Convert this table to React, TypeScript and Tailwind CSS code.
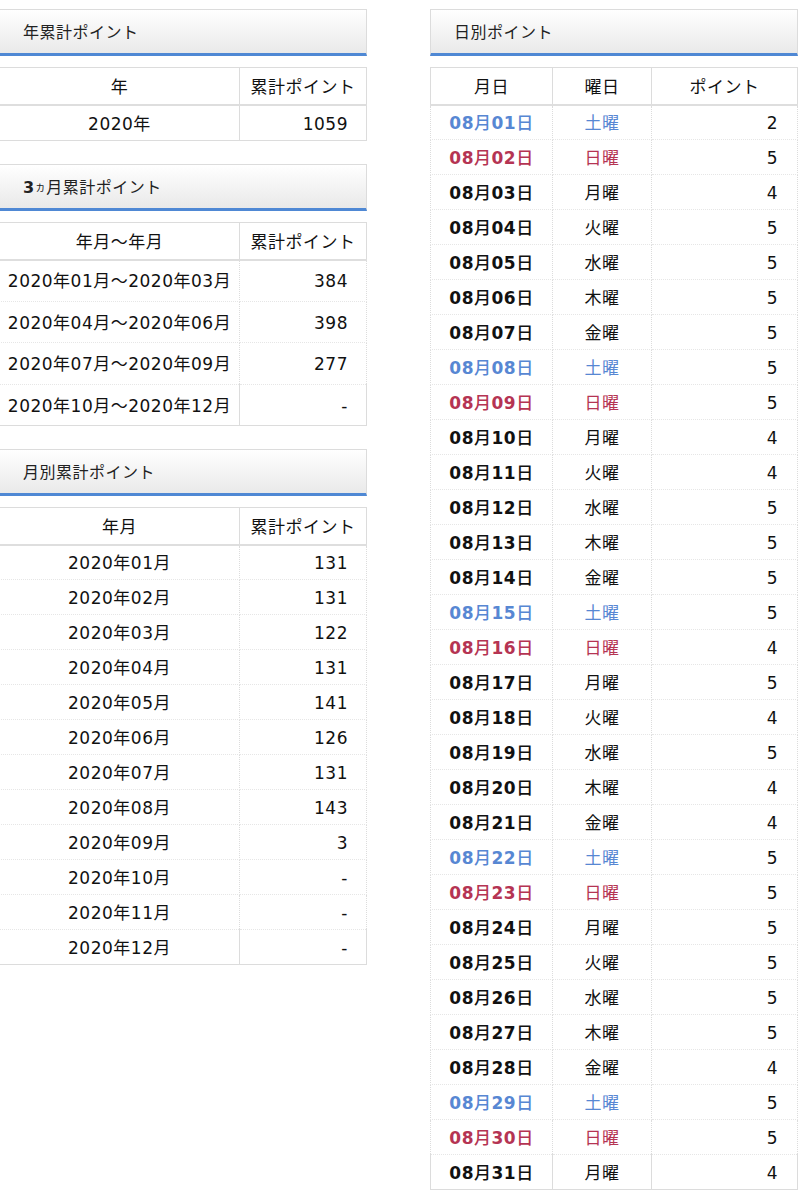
import React from 'react';

const dayPoints = [2, 5, 4, 5, 5, 5, 5, 5, 5, 4, 4, 5, 5, 5, 5, 4, 5, 4, 5, 4, 4, 5, 5, 5, 5, 5, 5, 4, 5, 5, 4];
const weekdays = ['土', '日', '月', '火', '水', '木', '金'];

const quarters = [
  ['2020年01月～2020年03月', '384'],
  ['2020年04月～2020年06月', '398'],
  ['2020年07月～2020年09月', '277'],
  ['2020年10月～2020年12月', '-'],
];

const months = ['131', '131', '122', '131', '141', '126', '131', '143', '3', '-', '-', '-'];

const Heading = ({ children }: { children: React.ReactNode }) => (
  <div className="flex h-[47px] items-center border border-[#dcdcdc] border-b-[3px] border-b-[#4f88d4] bg-linear-to-b from-white to-[#e9e9e9] pl-[23px] pt-[3px] text-[16px] text-[#222]">
    {children}
  </div>
);

const th = 'border border-[#dcdcdc] border-b-2 border-b-[#dedede] pt-[3px] text-center font-normal';

export default function App() {
  return (
    <div className="flex min-h-[1200px] items-start bg-white pt-[9px] font-['DejaVu_Sans','Noto_Sans_CJK_JP',sans-serif] text-[17px] tracking-[0.5px] text-[#111]">
      {/* left column */}
      <div className="ml-[-1px] w-[368px]">
        <Heading>年累計ポイント</Heading>
        <table className="mt-[11px] w-full table-fixed border-collapse">
          <colgroup>
            <col className="w-[240px]" />
            <col />
          </colgroup>
          <thead>
            <tr className="h-[37px]">
              <th className={th}>年</th>
              <th className={th}>累計ポイント</th>
            </tr>
          </thead>
          <tbody>
            <tr className="h-[36px]">
              <td className="border border-[#dcdcdc] pt-[3px] text-center">2020年</td>
              <td className="border border-[#dcdcdc] pr-[18px] pt-[3px] text-right">1059</td>
            </tr>
          </tbody>
        </table>

        <div className="mt-[23px]">
          <Heading>
            <span className="font-bold">3</span>
            <span className="text-[11px]">ヵ</span>月累計ポイント
          </Heading>
        </div>
        <table className="mt-[11px] w-full table-fixed border-collapse">
          <colgroup>
            <col className="w-[240px]" />
            <col />
          </colgroup>
          <thead>
            <tr className="h-[37px]">
              <th className={th}>年月～年月</th>
              <th className={th}>累計ポイント</th>
            </tr>
          </thead>
          <tbody>
            {quarters.map(([range, pt], i) => (
              <tr key={range} className="h-[41.5px]">
                <td className={`border-x border-[#dcdcdc] pt-[3px] text-center ${i === quarters.length - 1 ? 'border-b' : 'border-b border-b-[#e6e6e6] border-dotted'}`}>
                  {range}
                </td>
                <td className={`border-x border-[#dcdcdc] pr-[18px] pt-[3px] text-right ${i === quarters.length - 1 ? 'border-b' : 'border-b border-b-[#e6e6e6] border-dotted'}`}>
                  {pt}
                </td>
              </tr>
            ))}
          </tbody>
        </table>

        <div className="mt-[23px]">
          <Heading>月別累計ポイント</Heading>
        </div>
        <table className="mt-[11px] w-full table-fixed border-collapse">
          <colgroup>
            <col className="w-[240px]" />
            <col />
          </colgroup>
          <thead>
            <tr className="h-[37px]">
              <th className={th}>年月</th>
              <th className={th}>累計ポイント</th>
            </tr>
          </thead>
          <tbody>
            {months.map((pt, i) => (
              <tr key={i} className="h-[35px]">
                <td className={`border-x border-[#dcdcdc] pt-[3px] text-center ${i === months.length - 1 ? 'border-b' : 'border-b border-b-[#e6e6e6] border-dotted'}`}>
                  2020年{String(i + 1).padStart(2, '0')}月
                </td>
                <td className={`border-x border-[#dcdcdc] pr-[18px] pt-[3px] text-right ${i === months.length - 1 ? 'border-b' : 'border-b border-b-[#e6e6e6] border-dotted'}`}>
                  {pt}
                </td>
              </tr>
            ))}
          </tbody>
        </table>
      </div>

      {/* right column */}
      <div className="ml-[63px] w-[368px]">
        <Heading>日別ポイント</Heading>
        <table className="mt-[11px] w-full table-fixed border-collapse">
          <colgroup>
            <col className="w-[122px]" />
            <col className="w-[99px]" />
            <col />
          </colgroup>
          <thead>
            <tr className="h-[37px]">
              <th className={th}>月日</th>
              <th className={th}>曜日</th>
              <th className={th}>ポイント</th>
            </tr>
          </thead>
          <tbody>
            {dayPoints.map((pt, i) => {
              const wd = weekdays[i % 7];
              const color = wd === '土' ? 'text-[#5787d3]' : wd === '日' ? 'text-[#b53453]' : 'text-[#111]';
              const dd = String(i + 1).padStart(2, '0');
              const last = i === dayPoints.length - 1;
              const rowBorder = last ? 'border-b' : 'border-b border-b-[#e6e6e6] border-dotted';
              return (
                <tr key={i} className="h-[35px]">
                  <td className={`border-x border-[#dcdcdc] pt-[3px] text-center ${rowBorder} ${color}`}>
                    <span className="font-bold">08</span>
                    <span className="font-medium">月</span>
                    <span className="font-bold">{dd}</span>
                    <span className="font-medium">日</span>
                  </td>
                  <td className={`border-x border-[#dcdcdc] pt-[3px] text-center ${rowBorder} ${color === 'text-[#111]' ? '' : color}`}>
                    {wd}曜
                  </td>
                  <td className={`border-x border-[#dcdcdc] pr-[19px] pt-[3px] text-right ${rowBorder}`}>{pt}</td>
                </tr>
              );
            })}
          </tbody>
        </table>
      </div>
    </div>
  );
}
